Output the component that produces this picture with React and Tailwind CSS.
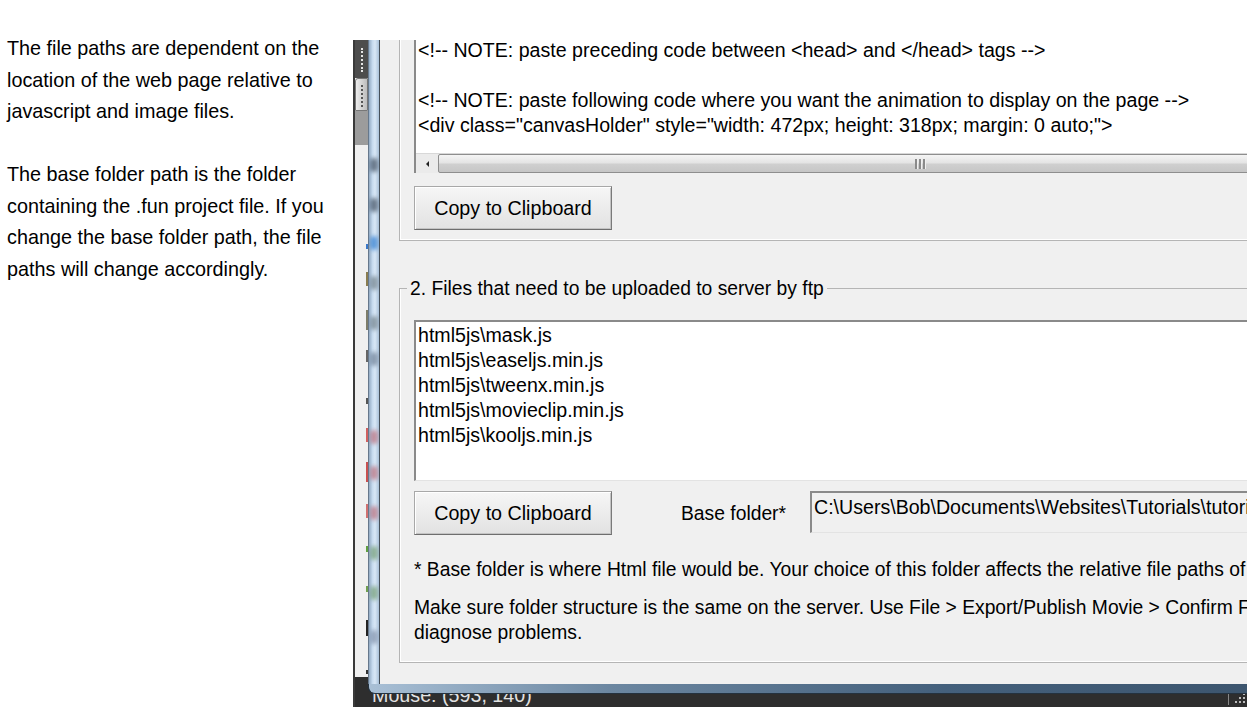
import React from "react";

const dialogFont = "font-['Liberation_Sans',Arial,sans-serif]";

function WinButton({ children }) {
  return (
    <div className="w-[198px] h-[44px] shrink-0 flex items-center justify-center bg-[linear-gradient(to_bottom,#f6f6f6,#ececec_50%,#e2e2e2)] border border-[#a8a8a8] border-b-[#6e6e6e] border-r-[#7a7a7a] shadow-[inset_1px_1px_0_#ffffff,inset_-1px_-1px_0_#c4c4c4] text-[19.7px] leading-[25px] text-black">
      {children}
    </div>
  );
}

function HScrollbar() {
  return (
    <div className="h-[20px] flex bg-[#ebebeb] overflow-hidden border-t border-[#d8d8d8]">
      <div className="w-[22px] shrink-0 flex items-center justify-center">
        <div className="w-0 h-0 border-y-[3px] border-y-transparent border-r-[3px] border-r-[#222]" />
      </div>
      <div className="w-[964px] shrink-0 h-[19px] rounded-l-[2px] border border-[#8e8e8e] bg-[linear-gradient(to_bottom,#f5f5f5,#e4e4e4_45%,#cfcfcf_55%,#c6c6c6)] flex items-center justify-center gap-[1px]">
        <div className="w-[3px] h-[10px] bg-[#8a8a8a] border-r border-[#f0f0f0]" />
        <div className="w-[3px] h-[10px] bg-[#8a8a8a] border-r border-[#f0f0f0]" />
        <div className="w-[3px] h-[10px] bg-[#8a8a8a] border-r border-[#f0f0f0]" />
      </div>
    </div>
  );
}

const toolbarBits = [
  { top: 204, h: 5, c: "bg-[#3a78c8]" },
  { top: 232, h: 14, c: "bg-[#8a7d50]" },
  { top: 270, h: 20, c: "bg-[#7d7d6a]" },
  { top: 310, h: 12, c: "bg-[#666]" },
  { top: 358, h: 6, c: "bg-[#555]" },
  { top: 388, h: 14, c: "bg-[#d06060]" },
  { top: 422, h: 20, c: "bg-[#c85050]" },
  { top: 464, h: 14, c: "bg-[#d07070]" },
  { top: 506, h: 6, c: "bg-[#60a040]" },
  { top: 546, h: 6, c: "bg-[#70a050]" },
  { top: 580, h: 16, c: "bg-[#222]" },
  { top: 630, h: 4, c: "bg-[#333]" },
];

const glassSpots = [
  { top: 118, c: "bg-[#3b4a5c]" },
  { top: 158, c: "bg-[#3b4a5c]" },
  { top: 196, c: "bg-[#2a7ad0]" },
  { top: 236, c: "bg-[#6d7d86]" },
  { top: 276, c: "bg-[#6d7d86]" },
  { top: 312, c: "bg-[#6a7c92]" },
  { top: 390, c: "bg-[#b86a78]" },
  { top: 426, c: "bg-[#b86a78]" },
  { top: 466, c: "bg-[#b86a78]" },
  { top: 506, c: "bg-[#6f9a70]" },
  { top: 546, c: "bg-[#6f9a70]" },
  { top: 590, c: "bg-[#7e8ea8]" },
];

function Toolbar() {
  return (
    <div className="w-[13px] shrink-0 relative flex flex-col bg-[#f0f0f0]">
      <div className="h-[38px] bg-[#4d4d4d] flex justify-center pt-[8px]">
        <div className="h-[24px] border-l-2 border-dotted border-[#e6e6e6]" />
      </div>
      <div className="h-[33px] bg-[linear-gradient(to_right,#ececec,#bdbdbd)] border border-[#777] rounded-tl-[3px] flex justify-center pt-[6px]">
        <div className="h-[22px] border-l-2 border-dotted border-[#555]" />
      </div>
      <div className="h-[34px] bg-[#9c9c9c]" />
      <div className="flex-1" />
      {toolbarBits.map((b, i) => (
        <div
          key={i}
          className={"absolute right-0 w-[2px] " + b.c}
          style={{ top: b.top, height: b.h }}
        />
      ))}
    </div>
  );
}

function Dialog() {
  return (
    <div className={"absolute top-0 left-[15px] w-[960px] h-[654px] flex flex-col " + dialogFont}>
      <div className="flex-1 flex min-h-0">
        <div className="w-[12px] shrink-0 relative overflow-hidden border-l border-[#66788c] border-r border-r-[#46505a] bg-[linear-gradient(to_right,#93abc4,#c6daee_35%,#d8e7f6_60%,#a9c1d9)]">
          {glassSpots.map((s, i) => (
            <div
              key={i}
              className={"absolute left-[1px] w-[8px] h-[14px] rounded-full blur-[2px] opacity-70 " + s.c}
              style={{ top: s.top }}
            />
          ))}
        </div>
        <div className="flex-1 bg-[#f0f0f0] overflow-hidden pl-[19px] text-black text-[19.6px] leading-[25px]">
          {/* group 1, its top is scrolled off */}
          <div className="-mt-[30px] border-l border-b border-[#b5b5b5] shadow-[inset_1px_-1px_0_#ffffff] pl-[14px] pb-[10px]">
            <div className="border-t-2 border-l-2 border-[#8a8a8a] bg-white">
              <div className="pt-[25.5px] pb-[15.5px] pl-[2px] whitespace-nowrap">
                <div>&lt;!-- NOTE: paste preceding code between &lt;head&gt; and &lt;/head&gt; tags --&gt;</div>
                <div>&nbsp;</div>
                <div>&lt;!-- NOTE: paste following code where you want the animation to display on the page --&gt;</div>
                <div>&lt;div class="canvasHolder" style="width: 472px; height: 318px; margin: 0 auto;"&gt;</div>
              </div>
              <HScrollbar />
            </div>
            <div className="mt-[13px]">
              <WinButton>Copy to Clipboard</WinButton>
            </div>
          </div>

          {/* group 2 */}
          <fieldset className="mt-[34.5px] border border-r-0 border-[#b5b5b5] shadow-[inset_1px_-1px_0_#ffffff] pl-[14px] pt-[19.5px] pb-[17.5px]">
            <legend className="-ml-[7px] px-[3px] text-[19.3px] whitespace-nowrap">
              2. Files that need to be uploaded to server by ftp
            </legend>
            <div className="h-[161px] border-t-2 border-l-2 border-[#8a8a8a] border-b border-b-[#e3e3e3] bg-white pt-[0.5px] pl-[2px] whitespace-nowrap">
              <div>html5js\mask.js</div>
              <div>html5js\easeljs.min.js</div>
              <div>html5js\tweenx.min.js</div>
              <div>html5js\movieclip.min.js</div>
              <div>html5js\kooljs.min.js</div>
            </div>
            <div className="mt-[10px] flex items-start">
              <WinButton>Copy to Clipboard</WinButton>
              <div className="ml-[69px] w-[106px] h-[44px] flex items-center text-[19.3px] whitespace-nowrap">
                Base folder*
              </div>
              <div className="ml-[23px] flex-1 h-[42px] border-t-2 border-l-2 border-[#8a8a8a] border-b border-r border-b-[#e3e3e3] border-r-[#e3e3e3] bg-[#f0f0f0] pl-[2px] pt-[2px] whitespace-nowrap overflow-hidden">
                C:\Users\Bob\Documents\Websites\Tutorials\tutorials
              </div>
            </div>
            <div className="mt-[21.5px] text-[19.3px] whitespace-nowrap">
              * Base folder is where Html file would be. Your choice of this folder affects the relative file paths of
            </div>
            <div className="mt-[13px] text-[19.3px] whitespace-nowrap">
              Make sure folder structure is the same on the server. Use File &gt; Export/Publish Movie &gt; Confirm F
            </div>
            <div className="text-[19.3px] whitespace-nowrap">diagnose problems.</div>
          </fieldset>
        </div>
      </div>
      <div className="h-[10px] shrink-0 rounded-bl-[7px] border-b border-l border-[#24323f] bg-[linear-gradient(to_right,#a9c0d6,#6c87a1_25%,#44607c_60%,#3b536b)]" />
    </div>
  );
}

export default function App() {
  return (
    <div className="w-[1254px] h-[707px] bg-white flex overflow-hidden">
      <div className="w-[353px] shrink-0 pl-[7px] pt-[33px] text-[19.8px] leading-[31.5px] text-black font-['Liberation_Sans',Arial,sans-serif]">
        <p>
          The file paths are dependent on the
          <br />
          location of the web page relative to
          <br />
          javascript and image files.
        </p>
        <p className="mt-[31.5px]">
          The base folder path is the folder
          <br />
          containing the .fun project file. If you
          <br />
          change the base folder path, the file
          <br />
          paths will change accordingly.
        </p>
      </div>

      <div className="mt-[40px] w-[894px] h-[667px] shrink-0 relative overflow-hidden">
        <div className="h-full flex flex-col border-l-2 border-[#3a3a3a]">
          <div className="flex-1 flex min-h-0">
            <Toolbar />
            <div className="flex-1 bg-[#f0f0f0]" />
          </div>
          <div className="h-[30px] shrink-0 bg-[#2e2e2e] flex items-start justify-between pl-[17px] pr-[2px] pt-[8px] text-[19.7px] leading-[20px] text-[#e2e2e2] font-['Liberation_Sans',Arial,sans-serif]">
            <span>Mouse: (593, 140)</span>
            <div className="flex items-end h-[20px] gap-[6px]">
              <div className="w-px h-[16px] bg-[#888]" />
              <div className="grid grid-cols-3 gap-[2px] mb-[2px]">
                <span />
                <span />
                <span className="w-[2px] h-[2px] bg-[#bbb]" />
                <span />
                <span className="w-[2px] h-[2px] bg-[#bbb]" />
                <span className="w-[2px] h-[2px] bg-[#bbb]" />
                <span className="w-[2px] h-[2px] bg-[#bbb]" />
                <span className="w-[2px] h-[2px] bg-[#bbb]" />
                <span className="w-[2px] h-[2px] bg-[#bbb]" />
              </div>
            </div>
          </div>
        </div>
        <Dialog />
      </div>
    </div>
  );
}
